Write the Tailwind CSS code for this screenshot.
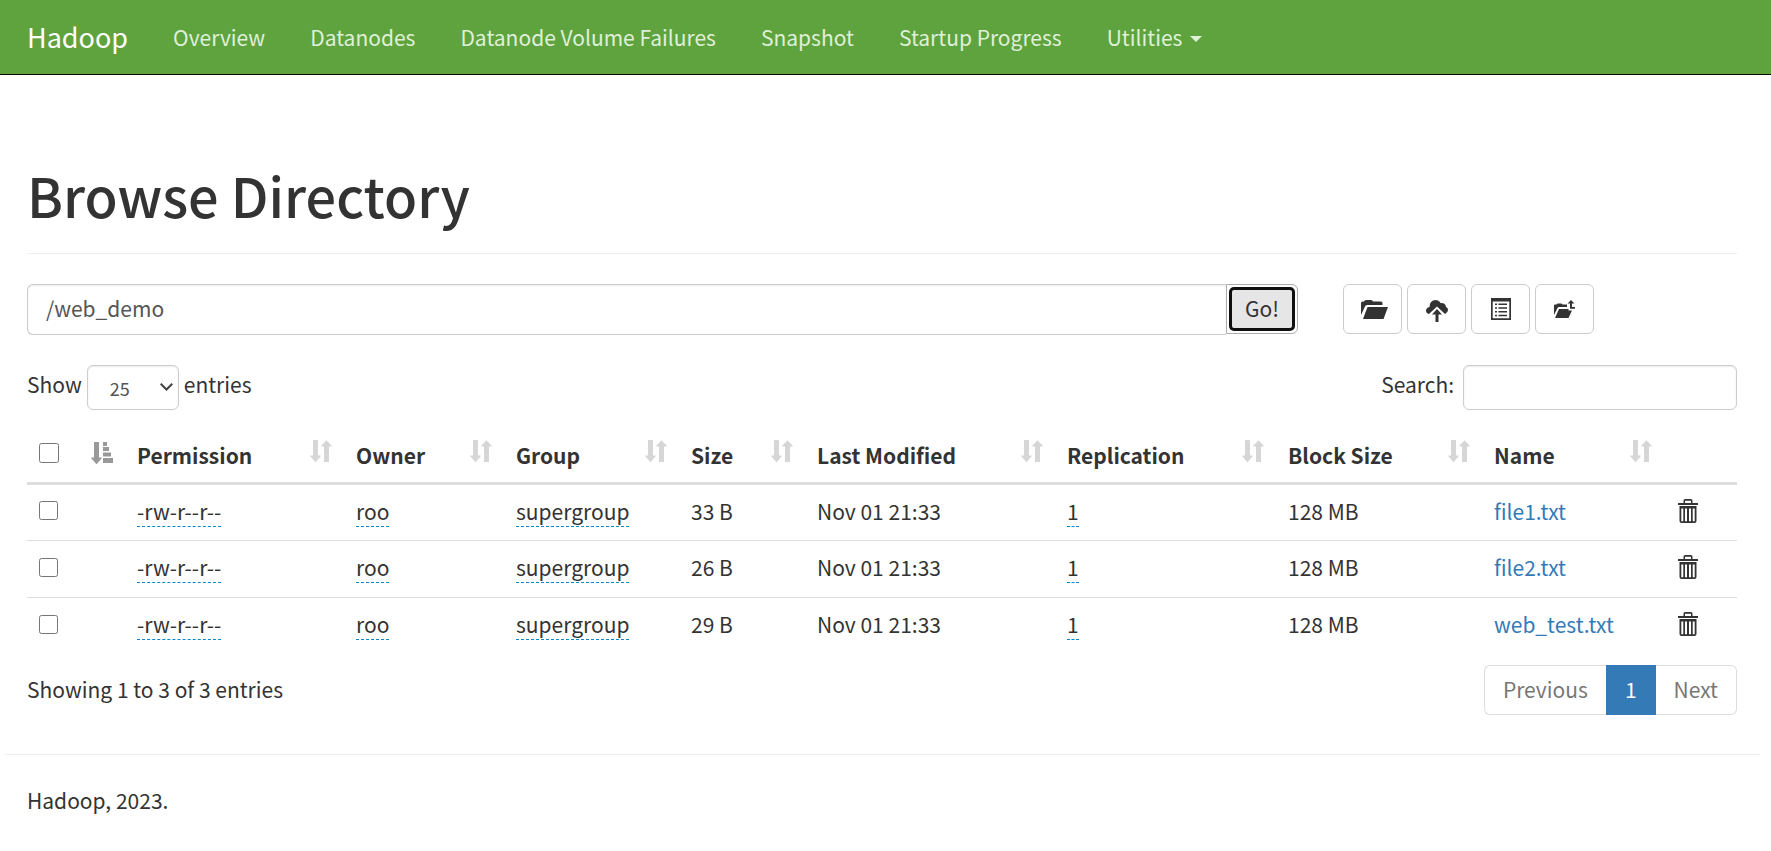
<!DOCTYPE html>
<html lang="en">
<head>
    <meta charset="UTF-8">
    <meta name="viewport" content="width=device-width, initial-scale=1.0">
    <title>Browsing HDFS</title>
    <script src="https://cdn.jsdelivr.net/npm/@tailwindcss/browser@4"></script>
</head>
<body class="bg-white font-['Noto_Sans_CJK_SC',sans-serif] text-[21px] leading-[30px] text-[#333]">

<!-- Shared icons -->
<svg class="hidden">
    <symbol id="sort" viewBox="0 0 22 22">
        <path d="M3.500 0h4Q8 0 8 .5V15.500h2.500q.5.300 0 1L6 21.700q-.5.500-1 0L.5 16.500q-.5-.7 0-1H3V.5Q3 0 3.500 0zM14.500 22h4q.5 0 .5-.5V6.500h2.500q.5-.3 0-1L17 .8q-.5-.5-1 0L11.500 5.500q-.5.700 0 1H14v15q0 .5.500.5z"/>
    </symbol>
    <symbol id="sort-asc" viewBox="0 0 22 22">
        <path d="M3.500 0h4Q8 0 8 .5V15.500h2.500q.5.300 0 1L6 21.700q-.5.500-1 0L.5 16.500q-.5-.7 0-1H3V.5Q3 0 3.500 0zM12 0h4v4h-4zM12 5h6v4h-6zM12 10.500h8v4h-8zM12 16h10v5H12z"/>
    </symbol>
    <symbol id="trash" viewBox="0 0 20 24">
        <path fill-rule="evenodd" d="M5.500 4V1.500Q5.500 0 7 0h6q1.500 0 1.500 1.500V4H20v2H0V4zM7 4h6V1.700H7zM1.500 7h17v15q0 2-2 2h-13q-2 0-2-2zM3.300 9.500v12.700h2V9.500zM7 9.500v12.700h2V9.500zM11 9.500v12.700h2V9.500zM14.700 9.500v12.700h2V9.500z"/>
    </symbol>
</svg>

<nav class="flex h-[75px] items-center border-b border-[#080808] bg-[#5fa33e] pl-[27px] text-[#dff0d8]">
    <a href="#" class="mr-[45px] text-[27px] text-white">Hadoop</a>
    <ul class="flex gap-[45px]">
        <li><a href="#">Overview</a></li>
        <li><a href="#">Datanodes</a></li>
        <li><a href="#">Datanode Volume Failures</a></li>
        <li><a href="#">Snapshot</a></li>
        <li><a href="#">Startup Progress</a></li>
        <li><a href="#" class="flex items-center gap-2">Utilities <span class="mt-1 border-x-6 border-t-6 border-x-transparent border-t-[#dff0d8]"></span></a></li>
    </ul>
</nav>

<main class="pt-[90px] pr-[34px] pl-[27px]">
    <h1 class="border-b border-[#eee] pb-[28px] text-[54px] leading-[60px] font-medium">Browse Directory</h1>

    <div class="mt-[30px] flex gap-[45px]">
        <form class="flex h-[51px] w-[1271px]" onsubmit="return false">
            <input type="text" id="directory" aria-label="Directory" value="/web_demo" class="min-w-0 flex-1 rounded-l-md border border-r-0 border-[#ccc] px-[18px] pb-[3px] text-[#555] shadow-[inset_0_1px_2px_rgba(0,0,0,0.08)] outline-none">
            <button type="button" class="h-[50px] w-[72px] rounded-r-md border border-[#adadad] p-0.5"><span class="flex h-full items-center justify-center rounded-[5px] border-[3px] border-[#101010] bg-[#e6e6e6] pb-0.5">Go!</span></button>
        </form>
        <div class="flex gap-[5px]">
            <button type="button" title="Create Directory" class="flex h-[50px] w-[59px] items-center justify-center rounded-md border border-[#ccc] pl-1">
                <svg class="h-[19px] w-[27px]" viewBox="0 0 27 19" fill="#333"><path d="M0 15V3Q0 1.500 1.500 1.500H3Q3.500 0 5 0h5q1.500 0 2 1.500h8q1.500 0 1.500 1.500v2H6Q4.500 5 4 6.500zM6.500 7H27l-4.500 12H2z"/></svg>
            </button>
            <button type="button" title="Upload Files" class="flex h-[50px] w-[59px] items-center justify-center rounded-md border border-[#ccc] pt-1">
                <svg class="h-[22px] w-[22px]" viewBox="0 0 22 22" fill="#333"><path d="M3 14Q0 13 0 10.500T3.500 7Q3.500 1 9 0q4 0 5.500 3 5-.5 5.500 4 2 .5 2 3t-3 4l-8-7.500zM11 9l5 5.500h-3.500V22h-3v-7.500H6z"/></svg>
            </button>
            <button type="button" title="Cut &amp; Paste" class="flex h-[50px] w-[59px] items-center justify-center rounded-md border border-[#ccc]">
                <svg class="h-[22px] w-5" viewBox="0 0 20 22" fill="#333"><path fill-rule="evenodd" d="M0 0h20v22H0zM1.700 3.500v16.800h16.600V3.500zM4 5.500h2v1.600H4zM7.500 5.500H16v1.600H7.500zM4 9.200h2v1.600H4zM7.500 9.200H16v1.600H7.500zM4 13h2v1.600H4zM7.500 13H16v1.600H7.500zM4 16.700h2v1.600H4zM7.500 16.700H16v1.600H7.500z"/></svg>
            </button>
            <button type="button" title="Parent Directory" class="flex h-[50px] w-[59px] items-center justify-center rounded-md border border-[#ccc]">
                <svg class="h-[18px] w-[21px]" viewBox="0 0 21 18" fill="#333"><path d="M0 15V5.500Q0 4.500 1 4.500h1.500Q3 3.500 4 3.500h3q1 0 1.500 1H13V7H5Q4 7 3.500 8zM5 9h9.500v1.500H18L14.500 18H1zM17 0l3.500 3.500H18V7h3v1.800h-5V3.500h-2.500z"/></svg>
            </button>
        </div>
    </div>

    <div class="mt-[30px] flex justify-between">
        <label class="flex h-[45px] gap-[5px] leading-[38px]">Show
            <span class="relative">
                <select class="h-[45px] w-[92px] appearance-none rounded-md border border-[#ccc] bg-white pl-[22px] text-[18px] text-[#555] shadow-[inset_0_1px_2px_rgba(0,0,0,0.08)]">
                    <option>10</option>
                    <option selected>25</option>
                    <option>50</option>
                    <option>100</option>
                </select>
                <svg class="pointer-events-none absolute top-[18px] right-[6px] h-2 w-[13px]" viewBox="0 0 13 8" fill="none" stroke="#444" stroke-width="2"><path d="M.7.7l5.800 5.800L12.300.7"/></svg>
            </span>
            entries
        </label>
        <label class="flex h-[45px] gap-[9px] leading-[38px]">Search:
            <input type="search" class="h-[45px] w-[274px] rounded-md border border-[#ccc] px-4 text-[18px] shadow-[inset_0_1px_2px_rgba(0,0,0,0.08)]">
        </label>
    </div>

    <table class="mt-[15px] w-full table-fixed text-left">
        <colgroup>
            <col class="w-[98px]">
            <col class="w-[219px]">
            <col class="w-[160px]">
            <col class="w-[175px]">
            <col class="w-[126px]">
            <col class="w-[250px]">
            <col class="w-[221px]">
            <col class="w-[206px]">
            <col class="w-[182px]">
            <col class="w-[73px]">
        </colgroup>
        <thead>
            <tr class="h-[58px] border-b-3 border-[#ddd]">
                <th class="px-3"><div class="flex items-center justify-between"><input type="checkbox" aria-label="Select all" class="size-5"><svg class="size-[22px] fill-[#999]"><use href="#sort-asc"/></svg></div></th>
                <th class="px-3 pt-1"><div class="flex justify-between">Permission <svg class="size-[22px] fill-[#d6d6d6]"><use href="#sort"/></svg></div></th>
                <th class="px-3 pt-1"><div class="flex justify-between">Owner <svg class="size-[22px] fill-[#d6d6d6]"><use href="#sort"/></svg></div></th>
                <th class="px-3 pt-1"><div class="flex justify-between">Group <svg class="size-[22px] fill-[#d6d6d6]"><use href="#sort"/></svg></div></th>
                <th class="px-3 pt-1"><div class="flex justify-between">Size <svg class="size-[22px] fill-[#d6d6d6]"><use href="#sort"/></svg></div></th>
                <th class="px-3 pt-1"><div class="flex justify-between">Last Modified <svg class="size-[22px] fill-[#d6d6d6]"><use href="#sort"/></svg></div></th>
                <th class="px-3 pt-1"><div class="flex justify-between">Replication <svg class="size-[22px] fill-[#d6d6d6]"><use href="#sort"/></svg></div></th>
                <th class="px-3 pt-1"><div class="flex justify-between">Block Size <svg class="size-[22px] fill-[#d6d6d6]"><use href="#sort"/></svg></div></th>
                <th class="px-3 pt-1"><div class="flex justify-between">Name <svg class="size-[22px] fill-[#d6d6d6]"><use href="#sort"/></svg></div></th>
                <th></th>
            </tr>
        </thead>
        <tbody id="files"></tbody>
    </table>

    <div class="mt-[11px] flex justify-between">
        <p class="leading-[48px]">Showing 1 to 3 of 3 entries</p>
        <ul class="flex h-[50px] leading-[46px]">
            <li><a href="#" class="block rounded-l-md border border-r-0 border-[#ddd] px-[18px] pb-0.5 text-[#777]">Previous</a></li>
            <li><a href="#" class="block border border-[#337ab7] bg-[#337ab7] px-[18px] pb-0.5 text-white">1</a></li>
            <li><a href="#" class="block rounded-r-md border border-l-0 border-[#ddd] px-[18px] pb-0.5 text-[#777]">Next</a></li>
        </ul>
    </div>
</main>

<footer class="mt-[39px] mr-[11px] ml-[5px] border-t border-[#eee] px-[22px] pt-[30px]">
    <p>Hadoop, 2023.</p>
</footer>

<script>
const files = [
    { name: 'file1.txt', size: '33 B' },
    { name: 'file2.txt', size: '26 B' },
    { name: 'web_test.txt', size: '29 B' }
];

function displayFiles(files) {
    const tbody = document.getElementById('files');
    tbody.innerHTML = '';
    files.forEach(file => {
        const row = document.createElement('tr');
        row.className = 'h-[57px] border-b border-[#ddd] last:border-b-0';
        row.innerHTML = `
            <td class="px-3 pb-[3px]"><input type="checkbox" aria-label="Select ${file.name}" class="block size-[19px]"></td>
            <td class="px-3 pb-[3px]"><span class="border-b border-dashed border-[#0088cc]">-rw-r--r--</span></td>
            <td class="px-3 pb-[3px]"><span class="border-b border-dashed border-[#0088cc]">roo</span></td>
            <td class="px-3 pb-[3px]"><span class="border-b border-dashed border-[#0088cc]">supergroup</span></td>
            <td class="px-3 pb-[3px]">${file.size}</td>
            <td class="px-3 pb-[3px]">Nov 01 21:33</td>
            <td class="px-3 pb-[3px]"><span class="border-b border-dashed border-[#0088cc]">1</span></td>
            <td class="px-3 pb-[3px]">128 MB</td>
            <td class="px-3 pb-[3px]"><a href="#" class="text-[#337ab7]">${file.name}</a></td>
            <td class="pb-[3px] pl-[14px]"><button type="button" title="Delete" class="block"><svg class="h-6 w-5 fill-[#333]"><use href="#trash"/></svg></button></td>
        `;
        tbody.appendChild(row);
    });
}

displayFiles(files);
</script>

</body>
</html>
